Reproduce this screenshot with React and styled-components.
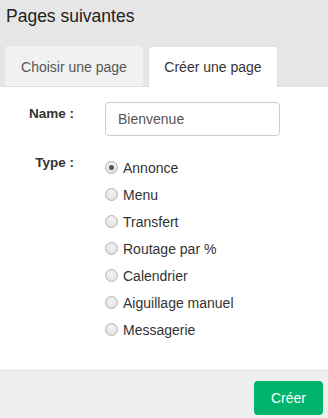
import React, { useState } from "react";
import styled, { createGlobalStyle } from "styled-components";

const GlobalStyle = createGlobalStyle`
  html, body {
    margin: 0;
    padding: 0;
    background: #efefef;
    font-family: "Liberation Sans", Arial, sans-serif;
  }
`;

const types = [
  "Annonce",
  "Menu",
  "Transfert",
  "Routage par %",
  "Calendrier",
  "Aiguillage manuel",
  "Messagerie",
];

function App() {
  const [tab, setTab] = useState(1);
  const [name, setName] = useState("Bienvenue");
  const [type, setType] = useState("Annonce");

  return (
    <>
      <GlobalStyle />
      <Dialog>
        <Header>
          <Title>Pages suivantes</Title>
          <Tabs>
            <Tab active={tab === 0} width={138} onClick={() => setTab(0)}>
              Choisir une page
            </Tab>
            <Tab active={tab === 1} width={130} onClick={() => setTab(1)}>
              Créer une page
            </Tab>
          </Tabs>
        </Header>
        <Body>
          <Row>
            <Label>Name :</Label>
            <Input value={name} onChange={(e) => setName(e.target.value)} />
          </Row>
          <Row>
            <Label>Type :</Label>
            <RadioList>
              {types.map((t) => (
                <RadioItem key={t} onClick={() => setType(t)}>
                  <Radio checked={type === t} />
                  <span>{t}</span>
                </RadioItem>
              ))}
            </RadioList>
          </Row>
        </Body>
        <Footer>
          <Button>Créer</Button>
        </Footer>
      </Dialog>
    </>
  );
}

export default App;

const Dialog = styled.div`
  width: 328px;
  height: 418px;
  display: flex;
  flex-direction: column;
  overflow: hidden;
`;

const Header = styled.div`
  background: #e6e6e6;
  padding: 0 0 0 5px;
`;

const Title = styled.h2`
  margin: 0;
  height: 46px;
  padding: 5px 0 0 1px;
  box-sizing: border-box;
  font-size: 17.5px;
  font-weight: normal;
  line-height: 22px;
  color: #222;
`;

const Tabs = styled.div`
  display: flex;
  gap: 5px;
  height: 40px;
`;

const Tab = styled.div`
  width: ${(p) => p.width}px;
  height: ${(p) => (p.active ? 41 : 40)}px;
  box-sizing: border-box;
  border-radius: 4px 4px 0 0;
  background: ${(p) => (p.active ? "#fff" : "#f1f1f1")};
  border: 1px solid ${(p) => (p.active ? "#dddddd" : "#f1f1f1")};
  border-bottom: none;
  display: flex;
  align-items: center;
  justify-content: center;
  font-size: 14px;
  color: ${(p) => (p.active ? "#333" : "#555")};
  cursor: pointer;
  position: relative;
  z-index: 1;
`;

const Body = styled.div`
  background: #fff;
  border-top: 1px solid #dddddd;
  border-bottom: 1px solid #e2e2e2;
  height: 285px;
  box-sizing: border-box;
  padding-top: 15px;
  display: flex;
  flex-direction: column;
  gap: 15px;
`;

const Row = styled.div`
  display: grid;
  grid-template-columns: 74px 1fr;
  column-gap: 31px;
  align-items: start;
`;

const Label = styled.label`
  text-align: right;
  font-size: 13.5px;
  font-weight: bold;
  color: #333;
  line-height: 20px;
  padding-top: 2px;
`;

const Input = styled.input`
  width: 175px;
  height: 34px;
  box-sizing: border-box;
  border: 1px solid #cccccc;
  border-radius: 4px;
  padding: 0 12px;
  font-family: inherit;
  font-size: 14px;
  color: #555;
  outline: none;
`;

const RadioList = styled.div`
  display: flex;
  flex-direction: column;
  padding-top: 3px;
`;

const RadioItem = styled.label`
  display: flex;
  align-items: center;
  gap: 5px;
  height: 27px;
  font-size: 14px;
  color: #333;
  cursor: pointer;
`;

const Radio = styled.span`
  width: 13px;
  height: 13px;
  box-sizing: border-box;
  border-radius: 50%;
  border: 1px solid #b5b5b5;
  background: radial-gradient(circle at 50% 35%, #f4f4f4 0%, #dcdcdc 100%);
  position: relative;
  flex: none;

  &::after {
    content: "";
    display: ${(p) => (p.checked ? "block" : "none")};
    position: absolute;
    left: 3px;
    top: 3px;
    width: 5px;
    height: 5px;
    border-radius: 50%;
    background: #555;
  }
`;

const Footer = styled.div`
  flex: 1;
  background: #efefef;
  display: flex;
  justify-content: flex-end;
  align-items: flex-start;
  padding: 10px 5px 0 0;
`;

const Button = styled.button`
  width: 69px;
  height: 34px;
  border: none;
  border-radius: 4px;
  background: #00b46c;
  color: #fff;
  font-family: inherit;
  font-size: 14px;
  cursor: pointer;
`;
